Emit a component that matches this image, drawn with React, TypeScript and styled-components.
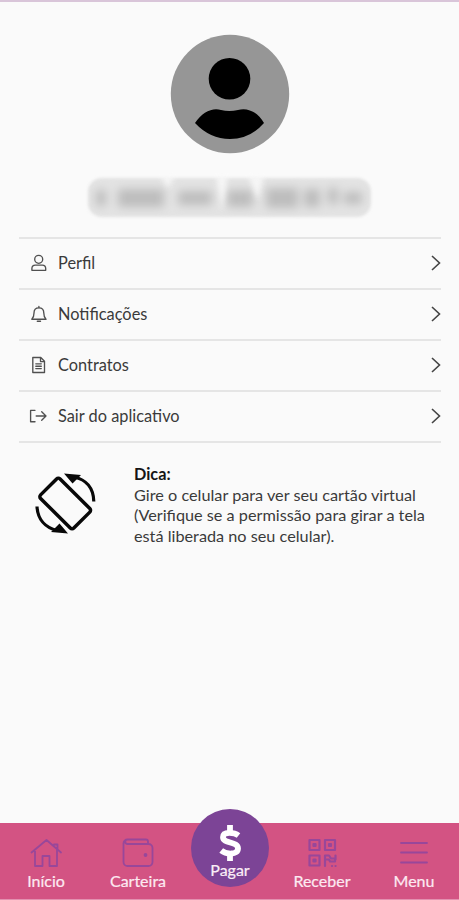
import React from "react";
import styled, { createGlobalStyle } from "styled-components";

const Global = createGlobalStyle`
  * { box-sizing: border-box; }
  body { margin: 0; background: #fafafa; font-family: Lato, "Open Sans", sans-serif; }
`;

const Screen = styled.div`
  width: 459px;
  height: 900px;
  display: flex;
  flex-direction: column;
  background: #fafafa;
  border-top: 2px solid #d9c5d9;
  overflow: hidden;
`;

const Content = styled.main`
  flex: 1;
  display: flex;
  flex-direction: column;
  align-items: center;
  padding: 32px 18px 0 19px;
`;

const Avatar = styled.svg`
  display: block;
  width: 120px;
  height: 120px;
`;

const HiddenName = styled.svg`
  display: block;
  width: 300px;
  height: 60px;
  margin: 14px 0 9px;
`;

const List = styled.nav`
  align-self: stretch;
  border-top: 2px solid #e5e5e5;
`;

const Row = styled.a`
  display: flex;
  align-items: center;
  height: 51px;
  padding: 0 0 2px 10px;
  border-bottom: 2px solid #e5e5e5;
  color: #3a3a3a;
`;

const RowIcon = styled.svg`
  width: 20px;
  height: 20px;
  flex: none;
  fill: none;
  stroke: #505050;
  stroke-width: 1.35;
  stroke-linecap: round;
  stroke-linejoin: round;
`;

const RowLabel = styled.span`
  flex: 1;
  margin-left: 9px;
  font-size: 16.35px;
  line-height: 20px;
`;

const Chevron = styled.svg`
  width: 11px;
  height: 18px;
  fill: none;
  stroke: #444;
  stroke-width: 1.6;
`;

const Tip = styled.section`
  align-self: stretch;
  display: flex;
  padding: 21px 0 0 15px;
`;

const RotateIcon = styled.svg`
  width: 64px;
  height: 66px;
  margin-top: 6px;
  flex: none;
`;

const TipText = styled.p`
  margin: 0 0 0 36px;
  font-size: 16.25px;
  line-height: 20.5px;
  color: #3a3a3a;
  white-space: nowrap;
`;

const TipTitle = styled.strong`
  display: block;
  color: #151515;
`;

const TabBar = styled.footer`
  display: grid;
  grid-template-columns: repeat(5, 92px);
  height: 77px;
  flex: none;
  background: #d35383;
  border-bottom: 1px solid #e391b0;
`;

const Tab = styled.button`
  display: flex;
  flex-direction: column;
  align-items: center;
  border: 0;
  padding: 14px 0 0;
  background: none;
  color: #fdeaf2;
  font: 400 16px/20px Lato, sans-serif;
  -webkit-text-stroke: 0.2px #fdeaf2;
`;

const TabIcon = styled.svg<{ $weight?: number }>`
  width: 34px;
  height: 32px;
  margin-bottom: 2px;
  fill: none;
  stroke: #98479a;
  stroke-width: ${(p) => p.$weight ?? 1.8};
  stroke-linecap: round;
  stroke-linejoin: round;
`;

const PayButton = styled.button`
  display: flex;
  flex-direction: column;
  align-items: center;
  justify-self: center;
  width: 78px;
  height: 78px;
  margin-top: -14px;
  padding: 15px 0 0;
  border: 0;
  border-radius: 50%;
  background: #7c4496;
  color: #fbeef6;
  font: 400 16px/16px Lato, sans-serif;
  -webkit-text-stroke: 0.2px #fbeef6;
`;

const Dollar = styled.svg`
  width: 24px;
  height: 38px;
  fill: none;
  stroke: #fff;
  stroke-width: 5.8;
`;

const rows = [
  {
    label: "Perfil",
    icon: (
      <>
        <circle cx="9.7" cy="6.3" r="4" />
        <path d="M2.900 17.300v-1.900a3.400 3.400 0 0 1 3.400-3.300h7a3.400 3.400 0 0 1 3.400 3.300v1.900z" />
      </>
    ),
  },
  {
    label: "Notificações",
    icon: (
      <>
        <path d="M2.800 15.200c1.600-1.500 2.200-3.300 2.200-6.300 0-3 1.800-5.100 4.900-5.100s4.900 2.100 4.900 5.100c0 3 .6 4.800 2.200 6.300z" />
        <path d="M9.900 2.500v1M8.300 17.200h3.200" />
      </>
    ),
  },
  {
    label: "Contratos",
    icon: (
      <>
        <path d="M3.800 2.500h8l3.700 3.800v11.200H3.800zM11.500 2.700v3.900h3.800" />
        <path d="M6.800 8.800h5.500M6.800 11.200h5.500M6.800 13.600h5.500" />
      </>
    ),
  },
  {
    label: "Sair do aplicativo",
    icon: <path d="M6 4.300H1.600v11.400H6M7.200 10H17M12.700 5.700 17 10l-4.300 4.300" />,
  },
];

export default function App() {
  return (
    <>
      <Global />
      <Screen>
        <Content>
          <Avatar viewBox="0 0 120 120">
            <circle cx="60" cy="60" r="59.2" fill="#969696" />
            <circle cx="59.5" cy="44.7" r="20.8" />
            <path d="M25 89C32 78 43 73 51 76Q59 78 68 76C77 73 88 78 94 89Q80 105 60 105T25 89Z" />
          </Avatar>
          <HiddenName viewBox="0 0 300 60" aria-label="Nome oculto">
            <defs>
              <filter id="soft" x="-20%" y="-40%" width="140%" height="180%">
                <feGaussianBlur stdDeviation="1.6" />
              </filter>
              <filter id="smudge" x="-60%" y="-60%" width="220%" height="220%">
                <feGaussianBlur stdDeviation="5" />
              </filter>
              <filter id="gap" x="-100%" y="-100%" width="300%" height="300%">
                <feGaussianBlur stdDeviation="2.5" />
              </filter>
            </defs>
            <rect x="8" y="10" width="283" height="39" rx="14" fill="#e3e3e3" filter="url(#soft)" />
            <g fill="#bdbdbd" filter="url(#smudge)">
              <rect x="16" y="22" width="10" height="16" />
              <rect x="38" y="21" width="46" height="18" />
              <rect x="98" y="23" width="34" height="14" />
              <rect x="147" y="22" width="26" height="17" />
              <rect x="186" y="20" width="32" height="20" />
              <rect x="224" y="21" width="16" height="18" />
              <rect x="248" y="20" width="10" height="16" />
              <rect x="264" y="24" width="18" height="12" />
            </g>
            <path d="M80 8h15l-7 12zM136 8h12l-6 34zM168 8h16l-6 24z" fill="#fafafa" filter="url(#gap)" opacity=".8" />
          </HiddenName>
          <List>
            {rows.map((row) => (
              <Row key={row.label}>
                <RowIcon viewBox="0 0 20 20">{row.icon}</RowIcon>
                <RowLabel>{row.label}</RowLabel>
                <Chevron viewBox="0 0 11 18">
                  <path d="m2 2 7.500 7L2 16" />
                </Chevron>
              </Row>
            ))}
          </List>
          <Tip>
            <RotateIcon viewBox="0 0 64 66">
              <g fill="none" stroke="#080808" strokeWidth="3.5">
                <rect x="-23.500" y="-13.800" width="47" height="27.600" rx="2.500" transform="translate(31.200 33.500) rotate(45)" />
                <path d="M40 7C52 9.500 59.500 18 59.800 31.500M3 36.500C3.600 49 11 57.500 23 60.500" strokeWidth="3.200" />
              </g>
              <path d="M30 3.500 47 5 38.500 13.500zM34 63.500 17 62 25.500 53.500z" fill="#080808" />
            </RotateIcon>
            <TipText>
              <TipTitle>Dica:</TipTitle>
              Gire o celular para ver seu cartão virtual
              <br />
              (Verifique se a permissão para girar a tela
              <br />
              está liberada no seu celular).
            </TipText>
          </Tip>
        </Content>
        <TabBar>
          <Tab>
            <TabIcon viewBox="0 0 34 32">
              <path d="M2.500 15.500 17.500 3l14.500 12.500M6 12.500V29h7.500V19h7v10H28V12.500M25 7.500h3.500v4" />
            </TabIcon>
            Início
          </Tab>
          <Tab>
            <TabIcon viewBox="0 0 34 32">
              <path d="M2.500 8v17a4 4 0 0 0 4 4h21a4 4 0 0 0 4-4V11a4 4 0 0 0-4-4h-21a2.200 2.200 0 0 1 0-4.500H25a2 2 0 0 1 2 2V7M2.500 8V6.500a4 4 0 0 1 4-4" />
              <circle cx="24.5" cy="18" r="1" fill="#98479a" />
            </TabIcon>
            Carteira
          </Tab>
          <PayButton>
            <Dollar viewBox="0 0 24 38">
              <path d="M12 1v7M12 30v7" />
              <path d="M20.500 11.500C16.500 8.500 5 7 5 13.300c0 6.700 15 3.800 15 11.200C20 31.200 8 30.500 3.200 26.500" />
            </Dollar>
            Pagar
          </PayButton>
          <Tab>
            <TabIcon viewBox="0 0 34 32" $weight={2.2}>
              <path d="M4.500 3h10v10h-10zM20 3h10v10H20zM4.500 18.500h10v10h-10zM8.500 7h2v2h-2zM24 7h2v2h-2zM8.500 22.500h2v2h-2z" />
              <path d="M20 29V18.500h4l2 3h4v3h-5l-1-2h-3M27 29h.1M30.500 29h.1M30.500 18.500v4" />
            </TabIcon>
            Receber
          </Tab>
          <Tab>
            <TabIcon viewBox="0 0 34 32">
              <path d="M4 6h26M4 15.500h26M4 25.500h26" />
            </TabIcon>
            Menu
          </Tab>
        </TabBar>
      </Screen>
    </>
  );
}
